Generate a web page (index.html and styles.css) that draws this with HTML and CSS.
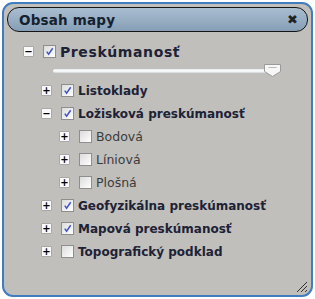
FILE: index.html
```html
<!DOCTYPE html>
<html>
<head>
<meta charset="utf-8">
<link rel="stylesheet" href="styles.css">
</head>
<body>
<div class="window">
  <div class="titlebar">
    <span class="title">Obsah mapy</span>
    <span class="close">&#x2716;</span>
  </div>
  <div class="tree">
    <div class="row lvl0">
      <span class="tog">&#8722;</span>
      <span class="cb on"><svg viewBox="0 0 12 12"><path d="M3 6.2 L5 9 L9.5 2.5" /></svg></span>
      <span class="lbl big">Preskúmanosť</span>
    </div>
    <div class="slider"><div class="track"></div><div class="thumb"><svg viewBox="0 0 17 13"><path d="M0.5 0.5 H16.5 V7.5 L8.5 12.5 L0.5 7.5 Z" fill="#f7f7f7" stroke="#9a9a9a"/><path d="M4.5 3.5 H12.5" stroke="#b8b8b8"/></svg></div></div>
    <div class="row lvl1">
      <span class="tog">+</span>
      <span class="cb on"><svg viewBox="0 0 12 12"><path d="M3 6.2 L5 9 L9.5 2.5" /></svg></span>
      <span class="lbl">Listoklady</span>
    </div>
    <div class="row lvl1">
      <span class="tog">&#8722;</span>
      <span class="cb on"><svg viewBox="0 0 12 12"><path d="M3 6.2 L5 9 L9.5 2.5" /></svg></span>
      <span class="lbl">Ložisková preskúmanosť</span>
    </div>
    <div class="row lvl2">
      <span class="tog">+</span>
      <span class="cb"></span>
      <span class="lbl thin">Bodová</span>
    </div>
    <div class="row lvl2">
      <span class="tog">+</span>
      <span class="cb"></span>
      <span class="lbl thin">Líniová</span>
    </div>
    <div class="row lvl2">
      <span class="tog">+</span>
      <span class="cb"></span>
      <span class="lbl thin">Plošná</span>
    </div>
    <div class="row lvl1">
      <span class="tog">+</span>
      <span class="cb on"><svg viewBox="0 0 12 12"><path d="M3 6.2 L5 9 L9.5 2.5" /></svg></span>
      <span class="lbl">Geofyzikálna preskúmanosť</span>
    </div>
    <div class="row lvl1">
      <span class="tog">+</span>
      <span class="cb on"><svg viewBox="0 0 12 12"><path d="M3 6.2 L5 9 L9.5 2.5" /></svg></span>
      <span class="lbl">Mapová preskúmanosť</span>
    </div>
    <div class="row lvl1">
      <span class="tog">+</span>
      <span class="cb"></span>
      <span class="lbl">Topografický podklad</span>
    </div>
  </div>
  <div class="grip"><svg viewBox="0 0 14 14"><path d="M13 3 L3 13 M13 7 L7 13 M13 11 L11 13" stroke="#333" stroke-width="1"/></svg></div>
</div>
</body>
</html>
```
FILE: styles.css
```css
html, body {
  margin: 0;
  padding: 0;
  background: #ffffff;
}
body {
  font-family: "DejaVu Sans", Verdana, sans-serif;
}
.window {
  position: relative;
  box-sizing: border-box;
  margin: 2px;
  width: 311px;
  height: 295px;
  background: #c0bfbb;
  border: 2px solid #3f7dc0;
  border-radius: 11px;
  padding: 3px 3px 0 3px;
}
.titlebar {
  box-sizing: border-box;
  height: 25px;
  border: 1px solid #151515;
  border-radius: 12px;
  background: linear-gradient(#a9bdd0, #869fb6);
  display: flex;
  align-items: center;
  justify-content: space-between;
  padding: 0 9px 0 11px;
}
.title {
  font-weight: bold;
  font-size: 13.5px;
  letter-spacing: 0.2px;
  color: #15212e;
}
.close {
  font-size: 13px;
  color: #222;
  font-weight: bold;
}
.tree {
  display: flex;
  flex-direction: column;
  padding-top: 8px;
}
.row {
  display: flex;
  align-items: center;
  height: 23px;
}
.lvl0 { padding-left: 16px; }
.lvl1 { padding-left: 34px; }
.lvl2 { padding-left: 52px; }
.tog {
  box-sizing: border-box;
  width: 11px;
  height: 11px;
  border: 1px solid #a8a8a8;
  border-radius: 1px;
  background: #fafafa;
  font-size: 10px;
  line-height: 9px;
  text-align: center;
  font-weight: bold;
  color: #000;
  font-family: "DejaVu Sans", sans-serif;
}
.cb {
  box-sizing: border-box;
  width: 13px;
  height: 13px;
  margin-left: 9px;
  border: 1px solid #8e8e8e;
  background: linear-gradient(135deg, #dcdcdc, #ffffff);
  display: flex;
}
.cb svg {
  width: 11px;
  height: 11px;
}
.cb svg path {
  fill: none;
  stroke: #3f53c8;
  stroke-width: 1.6;
}
.lbl {
  margin-left: 4px;
  font-size: 12px;
  font-weight: bold;
  color: #1d2236;
  white-space: nowrap;
}
.lbl.big {
  font-size: 14px;
  letter-spacing: 0.6px;
}
.lbl.thin {
  font-weight: normal;
  font-size: 12.5px;
  color: #3b3b3b;
}
.slider {
  position: relative;
  height: 16px;
  margin: 0 33px 0 46px;
  display: flex;
  align-items: center;
}
.track {
  flex: 1;
  height: 4px;
  background: linear-gradient(#e2e8ee, #ffffff 50%, #d0d4d8);
  border-radius: 2px;
}
.thumb {
  position: absolute;
  right: -6px;
  top: 1px;
  width: 17px;
  height: 13px;
}
.thumb svg {
  width: 17px;
  height: 13px;
  display: block;
}
.grip {
  position: absolute;
  right: 3px;
  bottom: 2px;
  width: 14px;
  height: 14px;
}
.grip svg {
  width: 14px;
  height: 14px;
  display: block;
}
```
